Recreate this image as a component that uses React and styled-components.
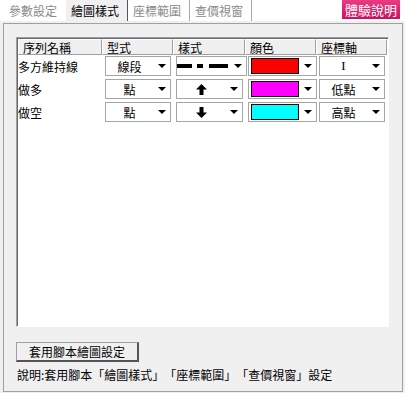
import React from "react";
import styled, { createGlobalStyle } from "styled-components";

const Global = createGlobalStyle`
  html, body { margin: 0; padding: 0; }
  body {
    background: #f0f0f0;
    font-family: "Noto Sans CJK TC", "Liberation Sans", sans-serif;
    font-size: 12px;
    color: #000;
    text-spacing-trim: space-all;
  }
`;

const Page = styled.div`
  width: 405px;
  height: 393px;
  overflow: hidden;
  background: #f0f0f0;
`;

const TabBar = styled.div`
  height: 21px;
  background: #fff;
  display: flex;
  align-items: stretch;
  padding-left: 4px;
`;

const Tab = styled.div`
  width: ${(p) => p.$w}px;
  box-sizing: border-box;
  padding-left: 5px;
  display: flex;
  align-items: center;
  font-size: 12px;
  line-height: 12px;
  color: ${(p) => (p.$active ? "#000" : "#8a8a8a")};
  background: ${(p) => (p.$active ? "#f0f0f0" : "#fff")};
  border-right: 1px solid ${(p) => (p.$sep ? (p.$active ? "#555" : "#a8a8a8") : "transparent")};
`;

const Spacer = styled.div`
  flex: 1;
`;

const PinkButton = styled.div`
  width: 58px;
  height: 19px;
  margin-right: 5px;
  display: flex;
  align-items: center;
  justify-content: center;
  color: #fff;
  font-size: 13px;
  background: linear-gradient(#ea3b82, #cf0f5e);
`;

const Panel = styled.div`
  margin: 2px 0 0 3px;
  width: 400px;
  height: 369px;
  box-sizing: border-box;
  border: 1px solid #a0a0a0;
  padding: 13px 12px 0 12px;
  display: flex;
  flex-direction: column;
`;

const TableBox = styled.div`
  width: 373px;
  height: 290px;
  box-sizing: border-box;
  background: #fff;
  border-top: 1px solid #a0a0a0;
  border-left: 1px solid #a0a0a0;
  border-right: 1px solid #fff;
  border-bottom: 1px solid #fff;
  box-shadow: inset 1px 1px 0 #696969;
  padding: 1px 0 0 1px;
`;

const Grid = styled.div`
  display: grid;
  grid-template-columns: 84px 71px 72px 71px 71px;
`;

const HeadCell = styled.div`
  height: 16px;
  box-sizing: border-box;
  background: #f0f0f0;
  border-top: 1px solid #fff;
  border-left: 1px solid #fff;
  border-right: 1px solid #a0a0a0;
  border-bottom: 1px solid #a0a0a0;
  padding-left: 4px;
  font-size: 12px;
  line-height: 15px;
  white-space: nowrap;
`;

const Cell = styled.div`
  height: 23px;
  box-sizing: border-box;
  padding: 1px 2px 2px 3px;
  display: flex;
  align-items: center;
`;

const LabelCell = styled(Cell)`
  padding: 0;
  font-size: 12px;
`;

const Combo = styled.div`
  flex: 1;
  height: 20px;
  box-sizing: border-box;
  border: 1px solid #a5a5a5;
  background: #fff;
  display: flex;
  align-items: center;
`;

const ComboValue = styled.div`
  flex: 1;
  display: flex;
  align-items: center;
  justify-content: center;
  font-size: ${(p) => (p.$serif ? "13px" : "12px")};
  font-family: ${(p) => (p.$serif ? '"Liberation Serif", serif' : "inherit")};
`;

const ArrowBox = styled.div`
  width: 17px;
  display: flex;
  align-items: center;
  justify-content: center;
`;

const Swatch = styled.div`
  width: 48px;
  height: 16px;
  box-sizing: border-box;
  margin-left: 2px;
  border: 1px solid #000;
  background: ${(p) => p.$color};
`;

const ApplyButton = styled.div`
  margin-top: 15px;
  width: 123px;
  height: 20px;
  box-sizing: border-box;
  background: #f0f0f0;
  border-top: 1px solid #a0a0a0;
  border-left: 1px solid #a0a0a0;
  border-right: 2px solid #555;
  border-bottom: 2px solid #555;
  display: flex;
  align-items: center;
  justify-content: center;
  font-size: 12px;
`;

const Note = styled.div`
  margin-top: 5px;
  padding-left: 1px;
  font-size: 12px;
  line-height: 16px;
  white-space: nowrap;
`;

const Arrow = () => (
  <svg width="8" height="4" viewBox="0 0 8 4">
    <polygon points="0,0 8,0 4,4" fill="#000" />
  </svg>
);

const DashDot = () => (
  <svg width="52" height="4" viewBox="0 0 52 4">
    <rect x="0" y="0" width="15" height="4" fill="#000" />
    <rect x="20" y="0" width="6" height="4" fill="#000" />
    <rect x="32" y="0" width="19" height="4" fill="#000" />
  </svg>
);

const UpArrow = () => (
  <svg width="11" height="11" viewBox="0 0 11 11">
    <polygon points="5.5,0 11,5.5 7.5,5.5 7.5,11 3.5,11 3.5,5.5 0,5.5" fill="#000" />
  </svg>
);

const DownArrow = () => (
  <svg width="11" height="11" viewBox="0 0 11 11">
    <polygon points="3.5,0 7.5,0 7.5,5.5 11,5.5 5.5,11 0,5.5 3.5,5.5" fill="#000" />
  </svg>
);

const ComboBox = ({ children, serif, swatch }) => (
  <Combo>
    {swatch ? <Swatch $color={swatch} /> : null}
    <ComboValue $serif={serif}>{children}</ComboValue>
    <ArrowBox>
      <Arrow />
    </ArrowBox>
  </Combo>
);

const rows = [
  { name: "多方維持線", type: "線段", style: <DashDot />, color: "#ff0000", axis: "I", serif: true },
  { name: "做多", type: "點", style: <UpArrow />, color: "#ff00ff", axis: "低點" },
  { name: "做空", type: "點", style: <DownArrow />, color: "#00ffff", axis: "高點" },
];

export default function App() {
  return (
    <Page>
      <Global />
      <TabBar>
        <Tab $w={62}>參數設定</Tab>
        <Tab $w={62} $active $sep>繪圖樣式</Tab>
        <Tab $w={62} $sep>座標範圍</Tab>
        <Tab $w={62} $sep>查價視窗</Tab>
        <Spacer />
        <PinkButton>體驗說明</PinkButton>
      </TabBar>
      <Panel>
        <TableBox>
          <Grid>
            <HeadCell>序列名稱</HeadCell>
            <HeadCell>型式</HeadCell>
            <HeadCell>樣式</HeadCell>
            <HeadCell>顏色</HeadCell>
            <HeadCell>座標軸</HeadCell>
            {rows.map((r) => (
              <React.Fragment key={r.name}>
                <LabelCell>{r.name}</LabelCell>
                <Cell>
                  <ComboBox>{r.type}</ComboBox>
                </Cell>
                <Cell>
                  <ComboBox>{r.style}</ComboBox>
                </Cell>
                <Cell>
                  <ComboBox swatch={r.color} />
                </Cell>
                <Cell>
                  <ComboBox serif={r.serif}>{r.axis}</ComboBox>
                </Cell>
              </React.Fragment>
            ))}
          </Grid>
        </TableBox>
        <ApplyButton>套用腳本繪圖設定</ApplyButton>
        <Note>說明:套用腳本「繪圖樣式」「座標範圍」「查價視窗」設定</Note>
      </Panel>
    </Page>
  );
}
